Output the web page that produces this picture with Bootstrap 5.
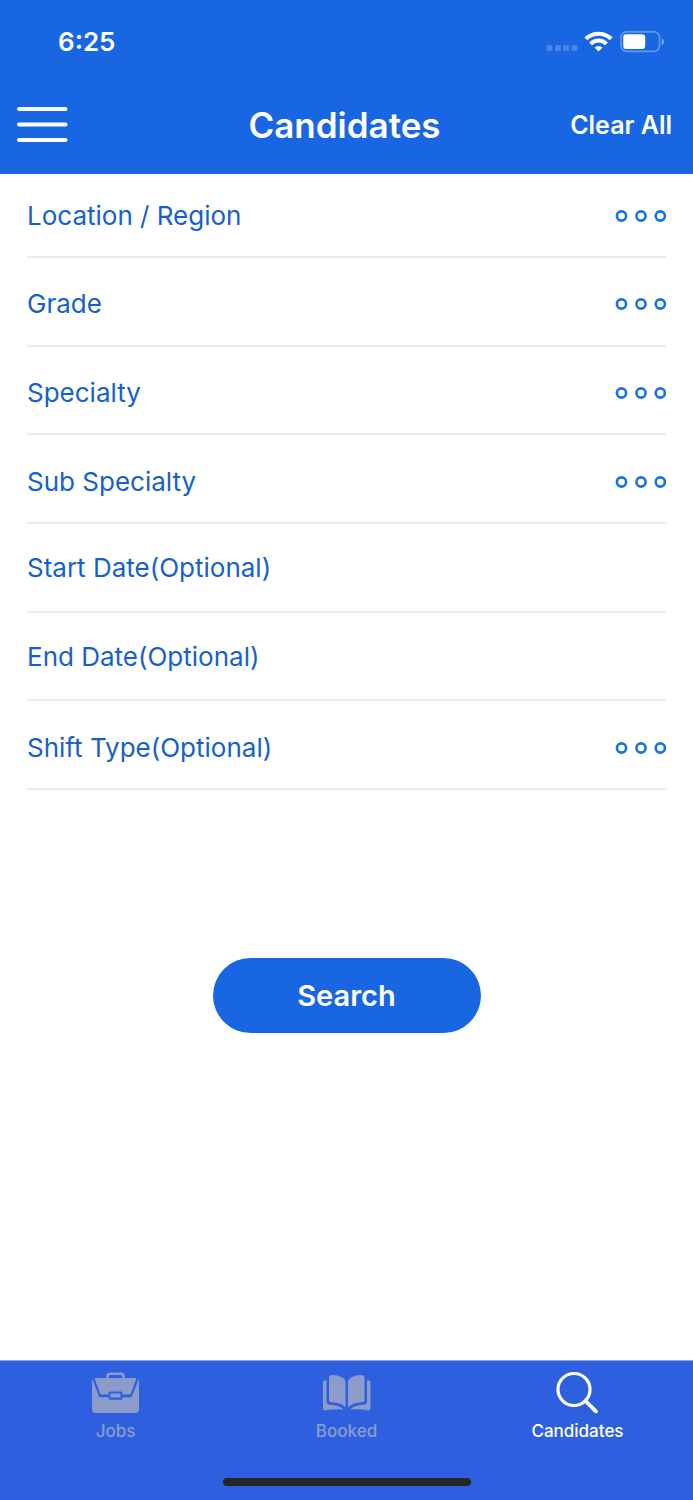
<!DOCTYPE html>
<html lang="en">
<head>
<meta charset="utf-8">
<meta name="viewport" content="width=device-width, initial-scale=1">
<title>Candidates</title>
<link href="https://cdn.jsdelivr.net/npm/bootstrap@5.3.0/dist/css/bootstrap.min.css" rel="stylesheet">
<style>
  :root { --brand: #1866e1; --ink: #165fcf; --tabs: #2e5fde; --muted: #8b9ccb; }
  body { font-family: Inter, "Liberation Sans", sans-serif; background: #fff; }
  svg { display: block; flex: none; }
  .app-header { background: var(--brand); color: #fff; }
  .status-bar { height: 84px; padding: 0 28px 0 58px; }
  .clock { font-size: 26px; line-height: 32px; font-weight: 600; }
  .title-bar { height: 90px; padding: 0 21px 9px 17px; display: grid; grid-template-columns: 1fr auto 1fr; }
  .title-bar h1 { font-size: 35px; line-height: 44px; font-weight: 600; }
  .clear-btn { font-size: 25px; line-height: 32px; font-weight: 600; }
  .bare { background: none; border: 0; padding: 0; color: inherit; }
  .filters { min-height: 616px; margin: 0 27px; display: grid; grid-template-rows: 84px repeat(6, 1fr); }
  .filter-row { border-bottom: 2px solid #ebebec; color: var(--ink); font-size: 26px; line-height: 32px; text-align: left; }
  .filter-row button.bare { padding-top: 6px; }
  .filter-row:first-child button.bare { padding-top: 2px; }
  .filter-row input { outline: 0; padding-top: 2px; font-size: 26px; line-height: 32px; }
  .filter-row input::placeholder { color: var(--ink); opacity: 1; }
  .search-btn { width: 268px; height: 75px; margin-top: 168px; font-size: 29px; line-height: 40px; font-weight: 600; color: #fff; background: var(--brand); }
  .search-btn:hover { color: #fff; background: #1259c9; }
  .tab-bar { height: 140px; background: var(--tabs); border-top: 1px solid #8ea3d8; }
  .tab-item { color: var(--muted); font-size: 17px; line-height: 20px; font-weight: 500; padding-top: 8px; }
  .tab-item.active { color: #fff; }
  .tab-item svg { margin-bottom: 6px; }
  .home-bar { width: 248px; height: 8px; margin-bottom: 14px; background: #262628; }
</style>
</head>
<body>
<div class="d-flex flex-column min-vh-100">
  <header class="app-header">
    <div class="status-bar d-flex justify-content-between align-items-center">
      <span class="clock">6:25</span>
      <svg width="120" height="24" viewBox="0 0 120 24" aria-hidden="true">
        <g fill="#4584eb">
          <rect x="1.500" y="15" width="6" height="6" rx="1.500"/><rect x="10" y="15" width="6" height="6" rx="1.500"/><rect x="18.300" y="15" width="6" height="6" rx="1.500"/><rect x="26.500" y="15" width="6" height="6" rx="1.500"/>
        </g>
        <g fill="none" stroke="#fff" stroke-width="4">
          <path d="M40.800 8.800a18.200 18.200 0 0 1 25.400 0"/>
          <path d="M45.500 13.900a11.400 11.400 0 0 1 16 0"/>
        </g>
        <path d="M53.500 21.500l-4-4a5.800 5.800 0 0 1 8 0z" fill="#fff"/>
        <rect x="76" y="1.900" width="38.500" height="19.400" rx="5.500" fill="none" stroke="#6297ee" stroke-width="1.700"/>
        <rect x="78.200" y="4.300" width="22" height="14.700" rx="3" fill="#fff"/>
        <path d="M116.800 8.300c2.600 1 2.600 6 0 7z" fill="#8bb2f3"/>
      </svg>
    </div>
    <div class="title-bar align-items-center">
      <button class="bare text-start" type="button" aria-label="Menu">
        <svg width="51" height="36" viewBox="0 0 51 36" stroke="#fff" stroke-width="4" stroke-linecap="round"><path d="M2 2h46.500M2 17.500h46.500M2 33h46.500"/></svg>
      </button>
      <h1 class="m-0">Candidates</h1>
      <button class="bare clear-btn text-end" type="button">Clear All</button>
    </div>
  </header>

  <svg width="0" height="0" class="position-absolute" aria-hidden="true">
    <symbol id="dots" viewBox="0 0 52 14"><g fill="none" stroke="#1873e2" stroke-width="2.600"><circle cx="7.500" cy="7" r="4.600"/><circle cx="27" cy="7" r="4.600"/><circle cx="46.300" cy="7" r="4.600"/></g></symbol>
  </svg>

  <main class="flex-grow-1 d-flex flex-column">
    <form class="d-flex flex-column" onsubmit="return false">
      <div class="filters">
        <div class="filter-row d-flex"><button type="button" class="bare w-100 d-flex justify-content-between align-items-center">Location / Region<svg width="52" height="14"><use href="#dots"/></svg></button></div>
        <div class="filter-row d-flex"><button type="button" class="bare w-100 d-flex justify-content-between align-items-center">Grade<svg width="52" height="14"><use href="#dots"/></svg></button></div>
        <div class="filter-row d-flex"><button type="button" class="bare w-100 d-flex justify-content-between align-items-center">Specialty<svg width="52" height="14"><use href="#dots"/></svg></button></div>
        <div class="filter-row d-flex"><button type="button" class="bare w-100 d-flex justify-content-between align-items-center">Sub Specialty<svg width="52" height="14"><use href="#dots"/></svg></button></div>
        <div class="filter-row d-flex"><input class="bare w-100" type="text" placeholder="Start Date(Optional)" aria-label="Start Date"></div>
        <div class="filter-row d-flex"><input class="bare w-100" type="text" placeholder="End Date(Optional)" aria-label="End Date"></div>
        <div class="filter-row d-flex"><button type="button" class="bare w-100 d-flex justify-content-between align-items-center">Shift Type(Optional)<svg width="52" height="14"><use href="#dots"/></svg></button></div>
      </div>
      <button class="btn search-btn rounded-pill border-0 align-self-center" type="submit">Search</button>
    </form>
  </main>

  <footer class="tab-bar d-flex flex-column justify-content-between align-items-center">
    <nav class="row g-0 w-100 text-center" aria-label="Main">
      <a href="#" class="col tab-item text-decoration-none d-flex flex-column align-items-center">
        <svg width="50" height="46" viewBox="0 0 50 46" aria-hidden="true">
          <path d="M16.500 10V7.500Q16.500 4.800 19.200 4.800h10.600Q32.500 4.800 32.500 7.500V10" fill="none" stroke="currentColor" stroke-width="2.600"/>
          <path d="M3.500 9h42l-5.500 15.500q-.4 1-1.500 1H31.500V24q0-1.500-1.500-1.500H19Q17.500 22.500 17.500 24v1.500h-7q-1.100 0-1.500-1z" fill="currentColor"/>
          <path d="M1 9.500l6.800 17.300q.7 1.500 2.200 1.500h7.500v1q0 1.500 1.500 1.500h11q1.500 0 1.500-1.500v-1H39q1.500 0 2.200-1.500L48 9.500V40q0 4-4 4H5q-4 0-4-4z" fill="currentColor"/>
          <rect x="19.500" y="24.500" width="10" height="4" fill="currentColor"/>
        </svg>
        Jobs
      </a>
      <a href="#" class="col tab-item text-decoration-none d-flex flex-column align-items-center">
        <svg width="50" height="46" viewBox="0 0 50 46" aria-hidden="true" fill="currentColor">
          <path d="M23.500 38.500Q19 33.500 9.500 33.200Q7 33.200 7 31V8.500Q7 6 10 6Q19.500 6 23.500 11.500z"/>
          <path d="M26 38.500Q30.500 33.500 40 33.200Q42.500 33.200 42.500 31V8.500Q42.500 6 39.500 6Q30 6 26 11.500z"/>
          <path d="M1 13q0-1.500 1.500-1.500H4.500v21Q4.500 35.500 8 35.700Q17 36 21.500 40.500Q12 39.500 3 41.500Q1 41.500 1 39.500z"/>
          <path d="M48.500 13q0-1.500-1.500-1.500h-2v21q0 3-3.500 3.200Q32.500 36 28 40.500q9.500-1 18.500 1q2 0 2-2z"/>
        </svg>
        Booked
      </a>
      <a href="#" class="col tab-item active text-decoration-none d-flex flex-column align-items-center" aria-current="page">
        <svg width="50" height="46" viewBox="0 0 50 46" aria-hidden="true" fill="none" stroke="currentColor">
          <circle cx="21" cy="20.500" r="16" stroke-width="3.200"/>
          <path d="M32.500 32L43 42.300" stroke-width="3.800" stroke-linecap="round"/>
        </svg>
        Candidates
      </a>
    </nav>
    <div class="home-bar rounded-pill"></div>
  </footer>
</div>
<script src="https://cdn.jsdelivr.net/npm/bootstrap@5.3.0/dist/js/bootstrap.bundle.min.js"></script>
</body>
</html>
